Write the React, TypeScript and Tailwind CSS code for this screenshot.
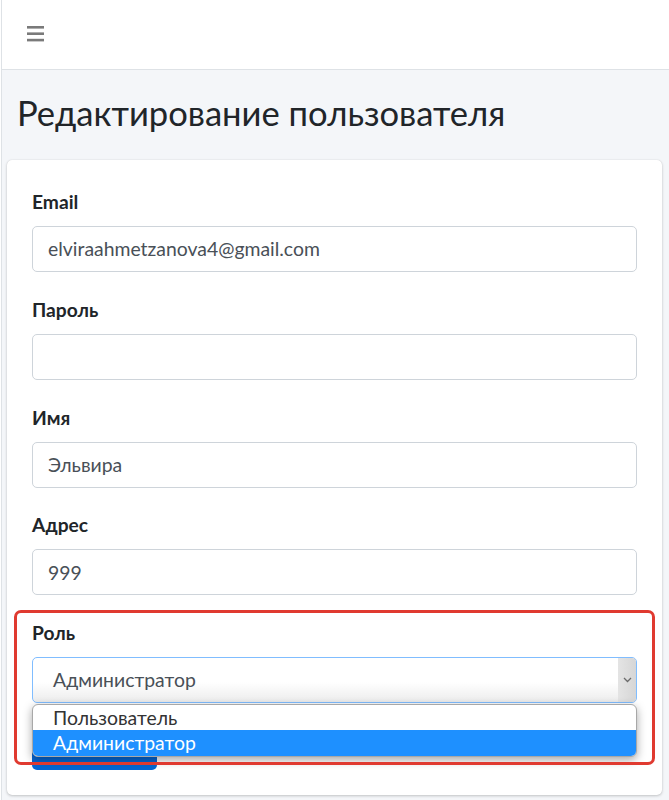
import React from "react";

const font = { fontFamily: "Lato, 'Noto Sans', sans-serif" };

function Field({ label, value }: { label: string; value?: string }) {
  return (
    <div className="mb-[22.75px]">
      <div className="h-[29px] mb-[10px] text-[19.2px] leading-[29px] font-bold text-[#212529]">{label}</div>
      <div className="h-[46px] rounded-[5px] border border-[#ced4da] bg-white flex items-center px-[15px] text-[19.4px] text-[#495057]">
        {value}
      </div>
    </div>
  );
}

export default function App() {
  return (
    <div className="min-h-[800px] bg-[#f4f6f9] ml-px border-l border-[#dee2e6] overflow-hidden" style={font}>
      <div className="h-[70px] bg-white border-b border-[#dee2e6] flex items-center pl-[25px]">
        <svg width="17" height="16" viewBox="0 0 17 16" className="mt-[-2px]">
          <rect x="0" y="0" width="17" height="2.6" fill="#7a7a7a" />
          <rect x="0" y="6.4" width="17" height="2.6" fill="#7a7a7a" />
          <rect x="0" y="12.8" width="17" height="2.6" fill="#7a7a7a" />
        </svg>
      </div>
      <div className="h-[90px] pl-[15px] pt-[22px]">
        <h1 className="text-[34.6px] leading-[41px] text-[#212529] font-normal">Редактирование пользователя</h1>
      </div>
      <div className="ml-[5px] mr-[7px] bg-white rounded-[5px] shadow-[0_0_1px_rgba(0,0,0,0.15),0_1px_3px_rgba(0,0,0,0.2)] px-[25px] pt-[27px] pb-[25px]">
        <Field label="Email" value="elviraahmetzanova4@gmail.com" />
        <Field label="Пароль" />
        <Field label="Имя" value="Эльвира" />
        <Field label="Адрес" value="999" />
        <div className="relative">
          <div className="h-[29px] mb-[10px] text-[19.2px] leading-[29px] font-bold text-[#212529]">Роль</div>
          <div className="h-[46px] rounded-[5px] border border-[#80bdff] bg-[linear-gradient(to_bottom,#ffffff_0%,#ffffff_55%,#ececec_100%)] flex items-center justify-between overflow-hidden">
            <span className="pl-[20px] text-[19.4px] text-[#495057]">Администратор</span>
            <div className="h-full w-[18px] bg-[linear-gradient(to_right,#e4e4e4,#d6d6d6)] flex items-center justify-center">
              <svg width="9" height="6" viewBox="0 0 9 6">
                <path d="M1 1 L4.5 4.5 L8 1" stroke="#6b6b6b" strokeWidth="1.3" fill="none" />
              </svg>
            </div>
          </div>
          <button className="mt-[21px] h-[46px] w-[125px] rounded-[5px] bg-[#0566d4] text-white text-[19px] block">
            Сохранить
          </button>
          <div className="absolute left-0 right-0 top-[86px] h-[53px] rounded-[6px] border border-[#a8a8a8] bg-white shadow-[0_3px_10px_rgba(0,0,0,0.35)] overflow-hidden z-10">
            <div className="h-[25px] flex items-center pl-[20px] text-[19.4px] text-[#333]">Пользователь</div>
            <div className="h-[26px] flex items-center pl-[20px] text-[19.4px] text-white bg-[#1e90ff]">Администратор</div>
          </div>
          <div className="absolute -left-[18px] -right-[18px] -top-[8px] h-[155px] rounded-[7px] border-[3.5px] border-[#e03a30] z-20 pointer-events-none" />
        </div>
      </div>
    </div>
  );
}
